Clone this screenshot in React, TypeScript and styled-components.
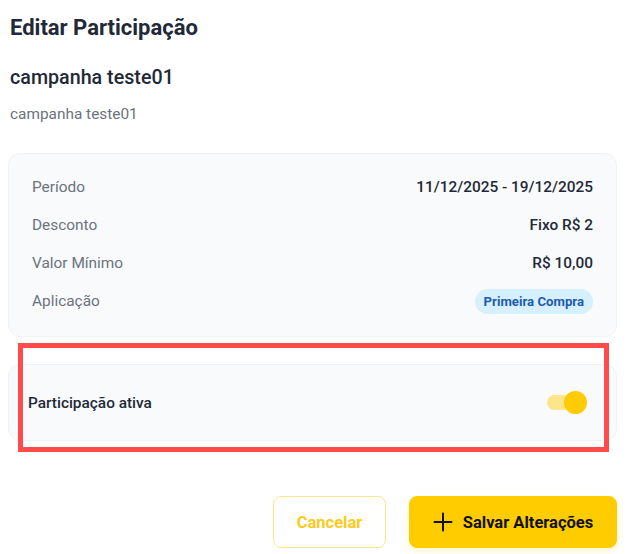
import React, { FC } from "react";
import styled, { createGlobalStyle } from "styled-components";

const GlobalStyle = createGlobalStyle`
  body {
    margin: 0;
    background: #ffffff;
    font-family: Roboto, "Liberation Sans", sans-serif;
    color: #1f2937;
  }
`;

const Page = styled.div`
  width: 628px;
  height: 554px;
  box-sizing: border-box;
  padding: 13px 11px 0 8px;
  overflow: hidden;
`;

const Title = styled.h1`
  margin: 0 0 0 2px;
  font-size: 22px;
  line-height: 30px;
  font-weight: 700;
  color: #1f2937;
`;

const CampaignName = styled.h2`
  margin: 21px 0 0 2px;
  font-size: 19.7px;
  line-height: 28px;
  font-weight: 500;
  color: #1f2937;
`;

const CampaignDesc = styled.p`
  margin: 11px 0 0 2px;
  font-size: 15.4px;
  line-height: 22px;
  color: #6b7280;
`;

const Card = styled.div`
  background: #f9fafb;
  border: 1px solid #f1f2f4;
  border-radius: 12px;
  box-sizing: border-box;
`;

const InfoCard = styled(Card)`
  margin-top: 28px;
  padding: 20px 23px 22px 23px;
  display: flex;
  flex-direction: column;
  gap: 12px;
`;

const InfoRow = styled.div`
  display: flex;
  align-items: center;
  justify-content: space-between;
  height: 26px;
  font-size: 15.4px;
`;

const Label = styled.span`
  color: #6b7280;
`;

const Value = styled.span`
  color: #1f2937;
  font-weight: 500;
`;

const Badge = styled.span`
  display: inline-flex;
  align-items: center;
  height: 25px;
  padding: 0 9px;
  border-radius: 13px;
  background: #d7f0fd;
  color: #1e5bb0;
  font-size: 13.2px;
  font-weight: 700;
`;

const Highlight = styled.div`
  position: relative;
  margin-top: 6px;
  padding: 21px 0 11px;
`;

const Marker = styled.div`
  position: absolute;
  top: 0;
  bottom: 0;
  left: 10px;
  right: 8px;
  border: 5px solid #ff4b4b;
  box-shadow: inset 0 0 0 1px #ffffff;
  pointer-events: none;
`;

const ToggleCard = styled(Card)`
  height: 77px;
  padding: 0 29px 0 19px;
  display: flex;
  align-items: center;
  justify-content: space-between;
`;

const ToggleLabel = styled.span`
  font-size: 15.4px;
  font-weight: 500;
  color: #1f2937;
`;

const Switch = styled.div<{ on: boolean }>`
  position: relative;
  width: 40px;
  height: 23px;
  display: flex;
  align-items: center;

  &::before {
    content: "";
    width: 36px;
    height: 15px;
    border-radius: 8px;
    background: ${(p) => (p.on ? "#fde58a" : "#d1d5db")};
  }

  &::after {
    content: "";
    position: absolute;
    top: 0;
    left: ${(p) => (p.on ? "17px" : "0")};
    width: 23px;
    height: 23px;
    border-radius: 50%;
    background: ${(p) => (p.on ? "#ffcb05" : "#ffffff")};
  }
`;

const Actions = styled.div`
  margin-top: 44px;
  display: flex;
  justify-content: flex-end;
  gap: 23px;
`;

const Button = styled.button<{ primary?: boolean }>`
  height: 52px;
  box-sizing: border-box;
  border-radius: 8px;
  font-family: Roboto, "Liberation Sans", sans-serif;
  font-size: 16.5px;
  font-weight: 700;
  display: inline-flex;
  align-items: center;
  justify-content: center;
  gap: 10px;
  cursor: pointer;
  border: 1px solid ${(p) => (p.primary ? "#ffcc00" : "#fde68a")};
  background: ${(p) => (p.primary ? "#ffcc00" : "#ffffff")};
  color: ${(p) => (p.primary ? "#111111" : "#fccb1c")};
  width: ${(p) => (p.primary ? "208px" : "113px")};
  box-shadow: ${(p) => (p.primary ? "0 4px 10px rgba(255, 204, 0, 0.18)" : "none")};
`;

const PlusIcon: FC = () => (
  <svg width="20" height="20" viewBox="0 0 20 20" fill="none">
    <path d="M10 1.5v17M1.5 10h17" stroke="#111" strokeWidth="2" strokeLinecap="round" />
  </svg>
);

const rows = [
  { label: "Período", value: "11/12/2025 - 19/12/2025" },
  { label: "Desconto", value: "Fixo R$ 2" },
  { label: "Valor Mínimo", value: "R$ 10,00" },
];

const App: FC = () => {
  return (
    <Page>
      <GlobalStyle />
      <Title>Editar Participação</Title>
      <CampaignName>campanha teste01</CampaignName>
      <CampaignDesc>campanha teste01</CampaignDesc>

      <InfoCard>
        {rows.map((r) => (
          <InfoRow key={r.label}>
            <Label>{r.label}</Label>
            <Value>{r.value}</Value>
          </InfoRow>
        ))}
        <InfoRow>
          <Label>Aplicação</Label>
          <Badge>Primeira Compra</Badge>
        </InfoRow>
      </InfoCard>

      <Highlight>
        <ToggleCard>
          <ToggleLabel>Participação ativa</ToggleLabel>
          <Switch on />
        </ToggleCard>
        <Marker />
      </Highlight>

      <Actions>
        <Button>Cancelar</Button>
        <Button primary>
          <PlusIcon />
          Salvar Alterações
        </Button>
      </Actions>
    </Page>
  );
};

export default App;
